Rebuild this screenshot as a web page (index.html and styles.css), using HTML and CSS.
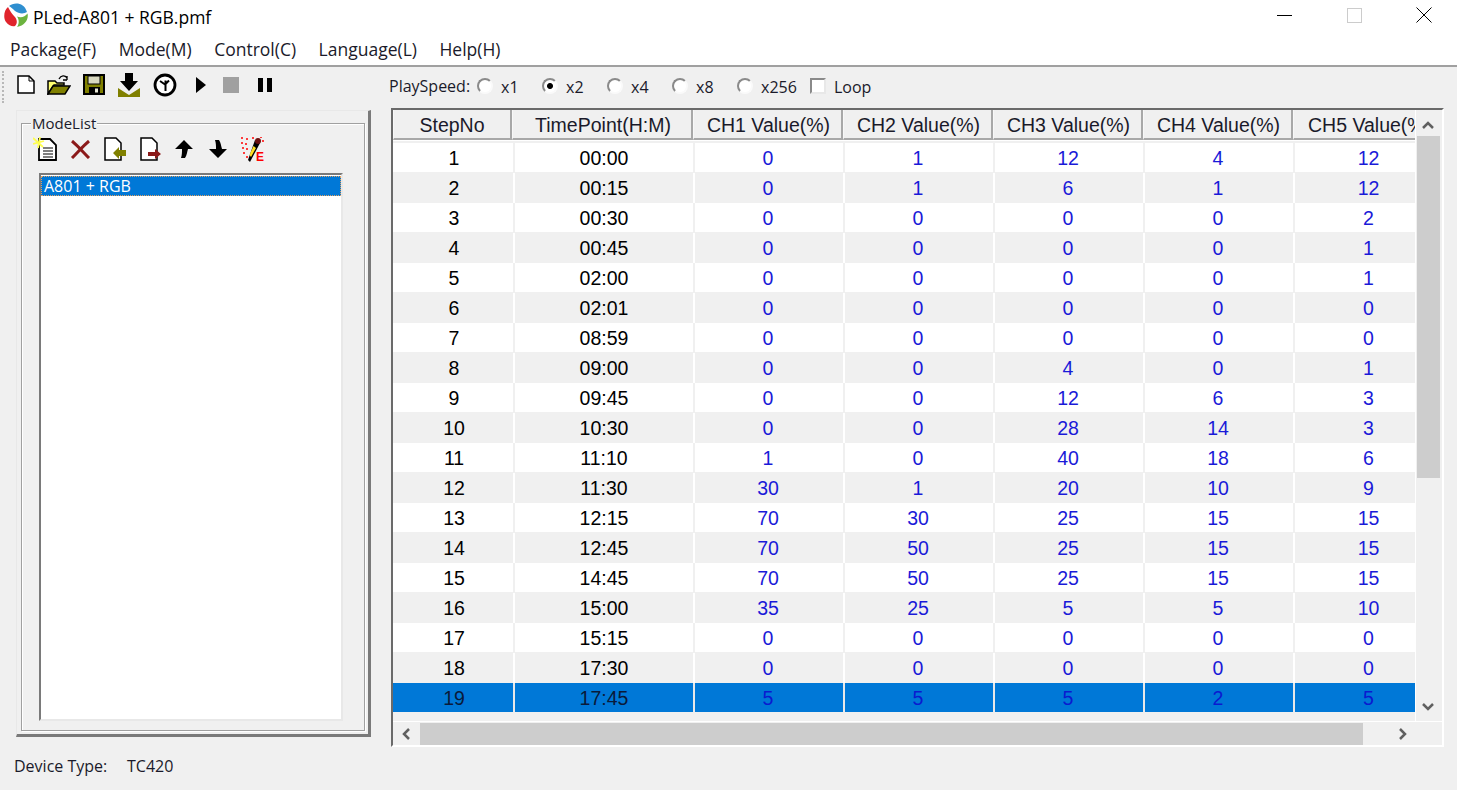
FILE: index.html
```html
<!DOCTYPE html>
<html lang="en">
<head>
  <meta charset="UTF-8">
  <title>PLed-A801 + RGB.pmf</title>
  <link rel="stylesheet" href="styles.css">
</head>
<body>
  <div class="window">
    <div class="titlebar">
      <svg class="app-logo" width="24" height="24" viewBox="0 0 24 24">
        <path d="M5 3C10 -1 20 -1 23 9C20 11 15 11 11 8C9 6 7 4 5 3Z" fill="#2f8fd0"/>
        <path d="M4 4C0 7 -1 15 2 19C5 23 9 24 11 23C14 20 13 16 10 13C8 11 6 8 4 4Z" fill="#e0242c"/>
        <path d="M23.500 10.500C25 16 21 23 13 24C15 21 15.500 17 13 13.500C17 15 21 14 23.500 10.500Z" fill="#6cb33f"/>
      </svg>
      <span class="title-text">PLed-A801 + RGB.pmf</span>
      <div class="win-buttons">
        <svg width="16" height="16" viewBox="0 0 16 16"><path d="M1 8.500H16" stroke="#000" fill="none"/></svg>
        <svg width="16" height="16" viewBox="0 0 16 16"><rect x="1.500" y="1.500" width="14" height="14" stroke="#ccc" fill="none"/></svg>
        <svg width="16" height="16" viewBox="0 0 16 16"><path d="M.5 .5L15.500 15.500M15.500 .5L.5 15.500" stroke="#000" fill="none"/></svg>
      </div>
    </div>

    <div class="menubar">
      <span>Package(F)</span>
      <span>Mode(M)</span>
      <span>Control(C)</span>
      <span>Language(L)</span>
      <span>Help(H)</span>
    </div>

    <div class="toolbar">
      <div class="grip"></div>
      <div class="tools">
        <svg width="18" height="19" viewBox="0 0 18 19"><path d="M1 1H12L17 6V18H1Z" fill="#fff" stroke="#000" stroke-width="1.500"/><path d="M12 1V6H17" fill="none" stroke="#000"/></svg>
        <svg width="24" height="21" viewBox="0 0 24 21"><path d="M1 20V7H8L10 9H17V11H7Z" fill="#ffff70" stroke="#000" stroke-width="1.500"/><path d="M1 20L6 12H23L18 20Z" fill="#808000" stroke="#000" stroke-width="1.500"/><path d="M12 5C14 1 18 1 20 4M20 6V2M20 6H16" fill="none" stroke="#000" stroke-width="1.300"/></svg>
        <svg width="22" height="21" viewBox="0 0 22 21"><rect x="1" y="1" width="20" height="19" fill="#808000" stroke="#000" stroke-width="2"/><rect x="5" y="2" width="12" height="8" fill="#d8d8c0" stroke="#000"/><rect x="6" y="13" width="11" height="7" fill="#000"/><rect x="12" y="14.500" width="3" height="4" fill="#e8e8d8"/></svg>
        <svg width="24" height="24" viewBox="0 0 24 24"><path d="M1 15L12 22L23 15V24H1Z" fill="#808000"/><path d="M8 0H16V8H21L12 18L3 8H8Z" fill="#000"/></svg>
        <svg width="24" height="24" viewBox="0 0 24 24"><circle cx="12" cy="12" r="10" fill="#fff" stroke="#000" stroke-width="2.800"/><path d="M12.500 7.500V18M7 8L12 11.500M16 7.500L12.500 11" fill="none" stroke="#000" stroke-width="2"/></svg>
        <svg class="tool-play" width="10" height="16" viewBox="0 0 10 16"><path d="M0 0L10 8L0 16Z" fill="#000"/></svg>
        <svg class="tool-stop" width="16" height="16" viewBox="0 0 16 16"><rect width="16" height="16" fill="#a0a0a0"/></svg>
        <svg class="tool-pause" width="14" height="14" viewBox="0 0 14 14"><rect x="0" width="5" height="14" fill="#000"/><rect x="9" width="5" height="14" fill="#000"/></svg>
      </div>
      <div class="speed">
        <span class="speed-label">PlaySpeed:</span>
        <label class="opt"><span class="radio"></span>x1</label>
        <label class="opt"><span class="radio radio-on"></span>x2</label>
        <label class="opt"><span class="radio"></span>x4</label>
        <label class="opt"><span class="radio"></span>x8</label>
        <label class="opt opt-wide"><span class="radio"></span>x256</label>
        <label class="opt"><span class="check"></span>Loop</label>
      </div>
    </div>

    <div class="main">
      <div class="left-panel">
        <div class="groupbox">
          <span class="group-title">ModeList</span>
          <div class="list-tools">
            <svg width="24" height="24" viewBox="0 0 24 24"><path d="M6 2H17L23 8V23H6Z" fill="#fff" stroke="#000" stroke-width="1.800"/><path d="M10 11H20M10 14H20M10 17H20M10 20H20" stroke="#000" stroke-width="1.200"/><path d="M0 1L10 10M7 0L5 11M0 7L11 4" stroke="#ffff50" stroke-width="1.800"/></svg>
            <svg width="21" height="19" viewBox="0 0 21 19"><path d="M2 1C8 6 13 12 19 18M19 1C13 6 8 12 2 18" stroke="#8b1a1a" stroke-width="3" fill="none"/></svg>
            <svg width="23" height="24" viewBox="0 0 23 24"><path d="M1 1H12L17 6V23H1Z" fill="#fff" stroke="#000" stroke-width="1.500"/><path d="M9 16L15 10V13H22V19H15V22Z" fill="#808000"/></svg>
            <svg width="22" height="24" viewBox="0 0 22 24"><path d="M1 1H12L17 6V23H1Z" fill="#fff" stroke="#000" stroke-width="1.500"/><path d="M21 17L15 12V15H8V19H15V22Z" fill="#8b1a1a"/></svg>
            <svg width="18" height="18" viewBox="0 0 18 18"><path d="M9 0L18 9H13C12 12 12 15 10 18H6C7 15 7 12 7 9H0Z" fill="#000"/></svg>
            <svg class="arrow-down" width="18" height="18" viewBox="0 0 18 18"><path d="M9 18L18 9H13C12 6 12 3 10 0H6C7 3 7 6 7 9H0Z" fill="#000"/></svg>
            <svg width="25" height="25" viewBox="0 0 25 25"><path d="M1 1H3M6 2H8M12 1H14M20 0H22M1 6H3M5 7H7M2 11H4M6 12H8M3 16H5M6 20H8M22 4H24" stroke="#f00" stroke-width="1.500"/><path d="M15 3L20 6L10 25L8 23Z" fill="#000"/><path d="M13.500 9L16 11L11 20L9.500 18Z" fill="#ffe020"/><circle cx="18" cy="4" r="3" fill="#6b1010"/><text x="16" y="24" class="edit-e">E</text></svg>
          </div>
          <div class="listbox">
            <div class="list-item">A801 + RGB</div>
          </div>
        </div>
      </div>

      <div class="grid-frame">
        <div class="grid-top">
          <div class="grid">
            <div class="head">
              <div class="hc c1">StepNo</div><div class="hc c2">TimePoint(H:M)</div><div class="hc c3">CH1 Value(%)</div><div class="hc c3">CH2 Value(%)</div><div class="hc c3">CH3 Value(%)</div><div class="hc c3">CH4 Value(%)</div><div class="hc c4">CH5 Value(%)</div>
            </div>
            <div class="row"><div class="c1">1</div><div class="c2">00:00</div><div class="c3 v">0</div><div class="c3 v">1</div><div class="c3 v">12</div><div class="c3 v">4</div><div class="c4 v">12</div></div>
            <div class="row"><div class="c1">2</div><div class="c2">00:15</div><div class="c3 v">0</div><div class="c3 v">1</div><div class="c3 v">6</div><div class="c3 v">1</div><div class="c4 v">12</div></div>
            <div class="row"><div class="c1">3</div><div class="c2">00:30</div><div class="c3 v">0</div><div class="c3 v">0</div><div class="c3 v">0</div><div class="c3 v">0</div><div class="c4 v">2</div></div>
            <div class="row"><div class="c1">4</div><div class="c2">00:45</div><div class="c3 v">0</div><div class="c3 v">0</div><div class="c3 v">0</div><div class="c3 v">0</div><div class="c4 v">1</div></div>
            <div class="row"><div class="c1">5</div><div class="c2">02:00</div><div class="c3 v">0</div><div class="c3 v">0</div><div class="c3 v">0</div><div class="c3 v">0</div><div class="c4 v">1</div></div>
            <div class="row"><div class="c1">6</div><div class="c2">02:01</div><div class="c3 v">0</div><div class="c3 v">0</div><div class="c3 v">0</div><div class="c3 v">0</div><div class="c4 v">0</div></div>
            <div class="row"><div class="c1">7</div><div class="c2">08:59</div><div class="c3 v">0</div><div class="c3 v">0</div><div class="c3 v">0</div><div class="c3 v">0</div><div class="c4 v">0</div></div>
            <div class="row"><div class="c1">8</div><div class="c2">09:00</div><div class="c3 v">0</div><div class="c3 v">0</div><div class="c3 v">4</div><div class="c3 v">0</div><div class="c4 v">1</div></div>
            <div class="row"><div class="c1">9</div><div class="c2">09:45</div><div class="c3 v">0</div><div class="c3 v">0</div><div class="c3 v">12</div><div class="c3 v">6</div><div class="c4 v">3</div></div>
            <div class="row"><div class="c1">10</div><div class="c2">10:30</div><div class="c3 v">0</div><div class="c3 v">0</div><div class="c3 v">28</div><div class="c3 v">14</div><div class="c4 v">3</div></div>
            <div class="row"><div class="c1">11</div><div class="c2">11:10</div><div class="c3 v">1</div><div class="c3 v">0</div><div class="c3 v">40</div><div class="c3 v">18</div><div class="c4 v">6</div></div>
            <div class="row"><div class="c1">12</div><div class="c2">11:30</div><div class="c3 v">30</div><div class="c3 v">1</div><div class="c3 v">20</div><div class="c3 v">10</div><div class="c4 v">9</div></div>
            <div class="row"><div class="c1">13</div><div class="c2">12:15</div><div class="c3 v">70</div><div class="c3 v">30</div><div class="c3 v">25</div><div class="c3 v">15</div><div class="c4 v">15</div></div>
            <div class="row"><div class="c1">14</div><div class="c2">12:45</div><div class="c3 v">70</div><div class="c3 v">50</div><div class="c3 v">25</div><div class="c3 v">15</div><div class="c4 v">15</div></div>
            <div class="row"><div class="c1">15</div><div class="c2">14:45</div><div class="c3 v">70</div><div class="c3 v">50</div><div class="c3 v">25</div><div class="c3 v">15</div><div class="c4 v">15</div></div>
            <div class="row"><div class="c1">16</div><div class="c2">15:00</div><div class="c3 v">35</div><div class="c3 v">25</div><div class="c3 v">5</div><div class="c3 v">5</div><div class="c4 v">10</div></div>
            <div class="row"><div class="c1">17</div><div class="c2">15:15</div><div class="c3 v">0</div><div class="c3 v">0</div><div class="c3 v">0</div><div class="c3 v">0</div><div class="c4 v">0</div></div>
            <div class="row"><div class="c1">18</div><div class="c2">17:30</div><div class="c3 v">0</div><div class="c3 v">0</div><div class="c3 v">0</div><div class="c3 v">0</div><div class="c4 v">0</div></div>
            <div class="row selected"><div class="c1">19</div><div class="c2">17:45</div><div class="c3 v">5</div><div class="c3 v">5</div><div class="c3 v">5</div><div class="c3 v">2</div><div class="c4 v">5</div></div>
          </div>
          <div class="vscroll">
            <svg class="sb-arrow" width="14" height="10" viewBox="0 0 14 10"><path d="M2 8L7 3L12 8" fill="none" stroke="#606060" stroke-width="2.500"/></svg>
            <div class="vthumb"></div>
            <div class="sb-fill"></div>
            <svg class="sb-arrow" width="14" height="10" viewBox="0 0 14 10"><path d="M2 2L7 7L12 2" fill="none" stroke="#606060" stroke-width="2.500"/></svg>
          </div>
        </div>
        <div class="hscroll">
          <svg class="sb-arrow" width="10" height="14" viewBox="0 0 10 14"><path d="M8 2L3 7L8 12" fill="none" stroke="#606060" stroke-width="2.500"/></svg>
          <div class="hthumb"></div>
          <svg class="sb-arrow" width="10" height="14" viewBox="0 0 10 14"><path d="M2 2L7 7L2 12" fill="none" stroke="#606060" stroke-width="2.500"/></svg>
        </div>
      </div>
    </div>

    <div class="statusbar">
      <span class="device-label">Device Type:</span>
      <span>TC420</span>
    </div>
  </div>
</body>
</html>
```

FILE: styles.css
```css
html, body {
  margin: 0;
  padding: 0;
  background: #f0f0f0;
}
.window {
  width: 1457px;
  height: 790px;
  overflow: hidden;
  font-family: "Liberation Sans", Arial, sans-serif;
  color: #000;
}

.titlebar {
  height: 34px;
  background: #fff;
  display: flex;
  align-items: center;
  padding-left: 4px;
  box-sizing: border-box;
}
.app-logo {
  margin-bottom: 4px;
}
.title-text {
  font-family: "Open Sans", sans-serif;
  font-size: 17.500px;
  margin-left: 5px;
  margin-bottom: 1px;
}
.win-buttons {
  margin-left: auto;
  margin-right: 25px;
  margin-bottom: 4px;
  display: flex;
  gap: 54px;
}

.menubar {
  height: 29px;
  padding-bottom: 2px;
  background: #fff;
  border-bottom: 2px solid #a0a0a0;
  display: flex;
  align-items: center;
  padding-left: 10px;
  gap: 22.500px;
  font-family: "Open Sans", sans-serif;
  font-size: 17.500px;
  color: #1a1a2a;
}

.toolbar {
  height: 39px;
  display: flex;
  align-items: center;
}
.grip {
  width: 3px;
  height: 32px;
  margin-left: 2px;
  border-left: 2px dotted #b8b8b8;
}
.tools {
  display: flex;
  align-items: center;
  width: 382px;
  padding-left: 10px;
  margin-bottom: 4px;
  gap: 12px;
  box-sizing: border-box;
}
.tool-play {
  margin-left: 7px;
}
.tool-stop {
  margin-left: 5px;
}
.tool-pause {
  margin-left: 7px;
}
.speed {
  display: flex;
  align-items: center;
  font-family: "Open Sans", sans-serif;
  font-size: 16px;
  color: #1a1a2a;
}
.speed-label {
  width: 88px;
  margin-bottom: 1px;
}
.opt {
  display: flex;
  align-items: center;
  gap: 8px;
  width: 65px;
}
.opt-wide {
  width: 73px;
}
.radio {
  width: 16px;
  height: 16px;
  margin-bottom: 2px;
  box-sizing: border-box;
  border-radius: 50%;
  background: #fff;
  border: 2px solid;
  border-color: #8a8a8a #fafafa #fafafa #8a8a8a;
  display: inline-block;
}
.radio-on {
  background: radial-gradient(circle, #000 2.500px, #fff 3.500px);
}
.check {
  width: 16px;
  height: 16px;
  margin-bottom: 2px;
  box-sizing: border-box;
  background: #fff;
  border: 2px solid;
  border-color: #8a8a8a #e8e8e8 #e8e8e8 #8a8a8a;
  display: inline-block;
}

.main {
  display: flex;
  align-items: flex-start;
  margin-top: 2px;
}
.left-panel {
  width: 355px;
  height: 627px;
  margin-left: 16px;
  margin-top: 2px;
  box-sizing: border-box;
  border-top: 1px solid #e8e8e8;
  border-left: 1px solid #e8e8e8;
  border-right: 3px solid #7a7a7a;
  border-bottom: 3px solid #7a7a7a;
  padding: 12px 3px 3px 4px;
}
.groupbox {
  position: relative;
  height: 100%;
  box-sizing: border-box;
  border: 1px solid #a0a0a0;
  box-shadow: inset 1px 1px 0 #fff, 1px 1px 0 #fff;
  padding: 11px 21px 8px 17px;
}
.group-title {
  position: absolute;
  top: -9px;
  left: 9px;
  padding: 0 1px;
  background: #f0f0f0;
  font-family: "Open Sans", sans-serif;
  font-size: 15px;
  line-height: 17px;
  color: #1a1a2a;
}
.list-tools {
  display: flex;
  align-items: center;
  height: 28px;
  margin-bottom: 10px;
  margin-left: -6px;
  gap: 13px;
}
.arrow-down {
  margin-left: 3px;
}
.edit-e {
  font-family: "Liberation Sans", sans-serif;
  font-size: 12px;
  font-weight: bold;
  fill: #f00;
}
.listbox {
  height: 548px;
  box-sizing: border-box;
  background: #fff;
  border-top: 2px solid #7a7a7a;
  border-left: 2px solid #7a7a7a;
  border-right: 2px solid #e8e8e8;
  border-bottom: 2px solid #e8e8e8;
  padding-top: 1px;
}
.list-item {
  height: 20px;
  line-height: 20px;
  box-sizing: border-box;
  background: #0078d7;
  color: #fff;
  outline: 1px dotted #e0a060;
  outline-offset: -1px;
  padding-left: 3px;
  font-family: "Open Sans", sans-serif;
  font-size: 16px;
}

.grid-frame {
  width: 1053px;
  height: 639px;
  margin-left: 20px;
  box-sizing: border-box;
  border-top: 2px solid #6a6a6a;
  border-left: 2px solid #6a6a6a;
  border-right: 2px solid #fff;
  border-bottom: 2px solid #fff;
}
.grid-top {
  display: flex;
  height: 611px;
}
.grid {
  width: 1022px;
  height: 611px;
  overflow: hidden;
  font-size: 19.500px;
  background: #f0f0f0;
}
.head {
  display: flex;
  height: 30px;
  margin-bottom: 3px;
  color: #1a1a2a;
  box-shadow: 0 1px 0 #fff;
}
.hc {
  display: flex;
  align-items: center;
  justify-content: center;
  flex: none;
  box-sizing: border-box;
  white-space: nowrap;
  overflow: hidden;
  padding-top: 3px;
  padding-left: 2px;
  border-right: 2px solid #a8a8a8;
  border-bottom: 2px solid #a8a8a8;
  border-left: 1px solid #f8f8f8;
}
.hc.c1 {
  width: 119px;
  padding-left: 0;
}
.hc.c2 {
  width: 181px;
}
.hc.c4 {
  border-right: none;
  justify-content: flex-start;
  padding-left: 14px;
}
.row {
  display: flex;
  height: 30px;
  line-height: 30px;
  text-align: center;
}
.row > div {
  flex: none;
  box-sizing: border-box;
  border-right: 2px solid #f0f0f0;
  background: #fff;
  height: 29px;
}
.row:nth-child(odd) > div {
  background: #f0f0f0;
  border-right-color: #fff;
  height: 30px;
}
.row > .c4 {
  border-right: none;
}
.c1 {
  width: 122px;
  padding-left: 2px;
}
.c2 {
  width: 180px;
}
.c3 {
  width: 150px;
}
.c4 {
  width: 150px;
}
.v {
  color: #1a1ad8;
  padding-right: 2px;
}
.row > .c4.v {
  padding-right: 3px;
}
.row.selected > div {
  background: #0078d7;
  border-right-color: #e8e8e8;
  color: #0a1a3a;
  height: 29px;
}
.row.selected > .v {
  color: #0a1ad0;
}

.vscroll {
  width: 25px;
  height: 611px;
  display: flex;
  flex-direction: column;
  align-items: center;
  padding: 10px 0 9px;
  box-sizing: border-box;
  border-left: 1px solid #fff;
}
.vthumb {
  width: 23px;
  height: 342px;
  margin-top: 6px;
  background: #cdcdcd;
  flex: none;
}
.sb-fill {
  flex: 1;
}
.hscroll {
  height: 24px;
  display: flex;
  align-items: center;
  box-sizing: border-box;
  padding-left: 8px;
  border-top: 1px solid #fff;
}
.hthumb {
  width: 943px;
  height: 22px;
  margin-left: 9px;
  margin-right: 35px;
  background: #cdcdcd;
}

.statusbar {
  display: flex;
  font-family: "Open Sans", sans-serif;
  font-size: 16px;
  color: #1a1a2a;
  padding-left: 14px;
  margin-top: 8px;
}
.device-label {
  width: 113px;
}
```
